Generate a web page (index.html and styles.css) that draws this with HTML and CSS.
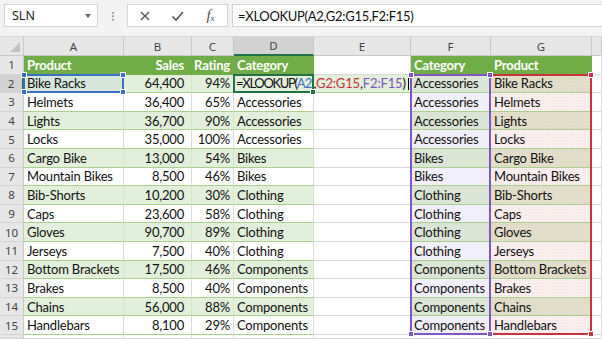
FILE: index.html
```html
<!DOCTYPE html>
<html>
<head>
<meta charset="utf-8">
<link rel="stylesheet" href="styles.css">
</head>
<body>
<div class="app">
  <div class="toolbar">
    <div class="namebox"><span>SLN</span><span class="caret"></span></div>
    <div class="grip"></div>
    <div class="fnbox">
      <svg class="ico" width="12" height="12" viewBox="0 0 12 12"><path d="M2 2 L10 10 M10 2 L2 10" stroke="#555" stroke-width="1.4" fill="none"/></svg>
      <svg class="ico" width="13" height="12" viewBox="0 0 13 12"><path d="M1.5 6.5 L5 10 L12 2" stroke="#555" stroke-width="1.6" fill="none"/></svg>
      <span class="fx">f<sub>x</sub></span>
    </div>
    <div class="formula">=XLOOKUP(A2,G2:G15,F2:F15)</div>
  </div>

  <div class="sheetwrap">
    <div class="sheet">
      <div class="r colhdr">
        <div class="corner"><span class="tri"></span></div>
        <div class="ch">A</div><div class="ch">B</div><div class="ch">C</div><div class="ch on">D</div><div class="ch">E</div><div class="ch">F</div><div class="ch">G</div><div class="ch"></div>
      </div>
      <div class="r hdr">
        <div class="rh">1</div>
        <div class="c t">Product</div><div class="c t n nb">Sales</div><div class="c t n">Rating</div><div class="c t">Category</div><div class="c"></div><div class="c t">Category</div><div class="c t">Product</div><div class="c"></div>
      </div>
      <div class="r g">
        <div class="rh on">2</div>
        <div class="c t a2">Bike Racks</div><div class="c t n nb">64,400</div><div class="c t n">94%</div>
        <div class="c t edit"><span class="etext"><span class="fn">=XLOOKUP(</span><span class="kb">A2</span>,<span class="kr">G2:G15</span>,<span class="kp">F2:F15</span>)</span><span class="cursor"></span></div>
        <div class="c t f">Accessories</div><div class="c t gc">Bike Racks</div><div class="c"></div>
      </div>
      <div class="r">
        <div class="rh">3</div>
        <div class="c t">Helmets</div><div class="c t n nb">36,400</div><div class="c t n">65%</div><div class="c t">Accessories</div><div class="c"></div><div class="c t f">Accessories</div><div class="c t gc">Helmets</div><div class="c"></div>
      </div>
      <div class="r g">
        <div class="rh">4</div>
        <div class="c t">Lights</div><div class="c t n nb">36,700</div><div class="c t n">90%</div><div class="c t">Accessories</div><div class="c"></div><div class="c t f">Accessories</div><div class="c t gc">Lights</div><div class="c"></div>
      </div>
      <div class="r">
        <div class="rh">5</div>
        <div class="c t">Locks</div><div class="c t n nb">35,000</div><div class="c t n">100%</div><div class="c t">Accessories</div><div class="c"></div><div class="c t f">Accessories</div><div class="c t gc">Locks</div><div class="c"></div>
      </div>
      <div class="r g">
        <div class="rh">6</div>
        <div class="c t">Cargo Bike</div><div class="c t n nb">13,000</div><div class="c t n">54%</div><div class="c t">Bikes</div><div class="c"></div><div class="c t f">Bikes</div><div class="c t gc">Cargo Bike</div><div class="c"></div>
      </div>
      <div class="r">
        <div class="rh">7</div>
        <div class="c t">Mountain Bikes</div><div class="c t n nb">8,500</div><div class="c t n">46%</div><div class="c t">Bikes</div><div class="c"></div><div class="c t f">Bikes</div><div class="c t gc">Mountain Bikes</div><div class="c"></div>
      </div>
      <div class="r g">
        <div class="rh">8</div>
        <div class="c t">Bib-Shorts</div><div class="c t n nb">10,200</div><div class="c t n">30%</div><div class="c t">Clothing</div><div class="c"></div><div class="c t f">Clothing</div><div class="c t gc">Bib-Shorts</div><div class="c"></div>
      </div>
      <div class="r">
        <div class="rh">9</div>
        <div class="c t">Caps</div><div class="c t n nb">23,600</div><div class="c t n">58%</div><div class="c t">Clothing</div><div class="c"></div><div class="c t f">Clothing</div><div class="c t gc">Caps</div><div class="c"></div>
      </div>
      <div class="r g">
        <div class="rh">10</div>
        <div class="c t">Gloves</div><div class="c t n nb">90,700</div><div class="c t n">89%</div><div class="c t">Clothing</div><div class="c"></div><div class="c t f">Clothing</div><div class="c t gc">Gloves</div><div class="c"></div>
      </div>
      <div class="r">
        <div class="rh">11</div>
        <div class="c t">Jerseys</div><div class="c t n nb">7,500</div><div class="c t n">40%</div><div class="c t">Clothing</div><div class="c"></div><div class="c t f">Clothing</div><div class="c t gc">Jerseys</div><div class="c"></div>
      </div>
      <div class="r g">
        <div class="rh">12</div>
        <div class="c t">Bottom Brackets</div><div class="c t n nb">17,500</div><div class="c t n">46%</div><div class="c t">Components</div><div class="c"></div><div class="c t f">Components</div><div class="c t gc">Bottom Brackets</div><div class="c"></div>
      </div>
      <div class="r">
        <div class="rh">13</div>
        <div class="c t">Brakes</div><div class="c t n nb">8,500</div><div class="c t n">40%</div><div class="c t">Components</div><div class="c"></div><div class="c t f">Components</div><div class="c t gc">Brakes</div><div class="c"></div>
      </div>
      <div class="r g">
        <div class="rh">14</div>
        <div class="c t">Chains</div><div class="c t n nb">56,000</div><div class="c t n">88%</div><div class="c t">Components</div><div class="c"></div><div class="c t f">Components</div><div class="c t gc">Chains</div><div class="c"></div>
      </div>
      <div class="r">
        <div class="rh">15</div>
        <div class="c t">Handlebars</div><div class="c t n nb">8,100</div><div class="c t n">29%</div><div class="c t">Components</div><div class="c"></div><div class="c t f">Components</div><div class="c t gc">Handlebars</div><div class="c"></div>
      </div>
      <div class="r">
        <div class="rh"></div>
        <div class="c"></div><div class="c"></div><div class="c"></div><div class="c"></div><div class="c"></div><div class="c"></div><div class="c"></div><div class="c"></div>
      </div>
    </div>

    <div class="overlay">
      <div class="sel selA"><span class="h tl"></span><span class="h tr"></span><span class="h bl"></span><span class="h br"></span></div>
      <div class="sel selD"><span class="h br"></span></div>
      <div class="sel selG"><span class="h tr"></span><span class="h br"></span></div>
      <div class="sel selF"><span class="h tl"></span><span class="h tr"></span><span class="h bl"></span><span class="h br"></span></div>
    </div>
  </div>
</div>
</body>
</html>
```

FILE: styles.css
```css
* { box-sizing: border-box; margin: 0; padding: 0; }
html, body { width: 602px; height: 339px; overflow: hidden; background: #fff; }
body { font-family: Lato, "Liberation Sans", sans-serif; color: #111; }

.toolbar {
  height: 36px;
  background: #f3f3f3;
  display: flex;
  align-items: flex-start;
  padding: 4px 0 0 4px;
}
.namebox {
  width: 94px; height: 23px;
  background: #fff;
  border: 1px solid #d4d4d4;
  display: flex; align-items: center; justify-content: space-between;
  padding: 0 6px 0 7px;
  font-family: "Noto Sans", sans-serif; font-size: 12.5px; color: #222;
}
.caret {
  width: 0; height: 0;
  border-left: 3.5px solid transparent;
  border-right: 3.5px solid transparent;
  border-top: 4px solid #666;
}
.grip {
  width: 2px; height: 10px;
  margin: 7px 0 0 14px;
  background-image: radial-gradient(circle, #999 0.9px, transparent 1.1px);
  background-size: 2px 3.5px;
}
.fnbox {
  width: 101px; height: 23px;
  margin-left: 13px;
  background: #fff;
  border: 1px solid #d4d4d4;
  display: grid;
  grid-template-columns: repeat(3, 1fr);
  align-items: center; justify-items: center;
}
.ico { display: block; }
.fx {
  font-family: "Liberation Serif", serif;
  font-style: italic;
  font-size: 15px;
  color: #555;
  line-height: 1;
}
.fx sub { font-size: 9px; vertical-align: -1px; }
.formula {
  flex: 1;
  height: 23px;
  margin: 0 -2px 0 4px;
  background: #fff;
  border: 1px solid #d4d4d4;
  display: flex; align-items: center;
  padding-left: 5px;
  font-size: 13px; letter-spacing: -0.3px; color: #111;
}

.sheetwrap { position: relative; }
.sheet, .overlay {
  display: grid;
  grid-template-columns: 24px 100px 68px 42px 80px 97px 80px 101px 10px;
  grid-template-rows: 20px repeat(15, 18.6px) 4px;
}
.overlay { position: absolute; inset: 0; pointer-events: none; }
.r { display: contents; }

.corner {
  background: #e6e6e6;
  border-right: 1px solid #c8c8c8;
  border-bottom: 1px solid #c8c8c8;
  border-top: 1px solid #d6d6d6;
  display: flex; align-items: flex-end; justify-content: flex-end;
  padding: 0 3px 3px 0;
}
.tri {
  width: 0; height: 0;
  border-left: 10px solid transparent;
  border-bottom: 10px solid #c2c2c2;
}
.ch {
  background: #e6e6e6;
  border-top: 1px solid #d6d6d6;
  border-right: 1px solid #c8c8c8;
  border-bottom: 1px solid #c8c8c8;
  display: flex; align-items: center; justify-content: center;
  font-family: "Noto Sans", sans-serif; font-size: 11.5px; color: #444;
}
.ch.on { background: #d2d2d2; border-bottom: 2px solid #217346; }
.rh {
  background: #e6e6e6;
  border-right: 1px solid #c8c8c8;
  border-bottom: 1px solid #d4d4d4;
  display: flex; align-items: center; justify-content: center;
  font-family: "Noto Sans", sans-serif; font-size: 11.5px; color: #444;
}
.rh.on { background: #d2d2d2; border-right: 2px solid #217346; }

.c {
  border-right: 1px solid #dadada;
  border-bottom: 1px solid #dadada;
  display: flex; align-items: center;
  padding: 0 3px;
  white-space: nowrap;
  overflow: hidden;
  font-size: 13px;
  letter-spacing: -0.2px;
}
.c.n { justify-content: flex-end; }
.c.nb { padding-right: 7px; }
.c.t { border-bottom-color: #a9d08e; }
.r.g .c.t { background: #e2efda; border-right-color: #d3e6c6; }
.r.hdr .c.t {
  background: #70ad47; color: #fff; font-weight: bold;
  border-right-color: #70ad47; border-bottom-color: #70ad47;
}
.r.g .c.a2 { background: #d6e6da; }

.r .c.f { background: #f1eff9; }
.r.g .c.f { background: #dbe5d6; }
.r .c.gc {
  background-color: #fbeeee;
  background-image: radial-gradient(circle, rgba(200, 120, 120, 0.12) 0.6px, transparent 0.9px);
  background-size: 3px 3px;
}
.r.g .c.gc {
  background-color: #e2dec9;
  background-image: radial-gradient(circle, rgba(150, 130, 90, 0.12) 0.6px, transparent 0.9px);
  background-size: 3px 3px;
}

.r.g .c.edit {
  grid-column: span 2;
  background: #e2efda;
  border-right-color: transparent;
  overflow: visible;
  padding-left: 2px;
}
.etext { letter-spacing: -0.15px; flex: none; }
.fn { letter-spacing: -1.3px; }
.kb { color: #3b6fc4; letter-spacing: -0.8px; margin-right: 2px; }
.kr { color: #c7343f; }
.kp { color: #7e57c2; }
.cursor { display: inline-block; flex: none; width: 1px; height: 14px; background: #000; margin-left: 2px; }

.sel { position: relative; margin: -1px 0 0 -1px; }
.selA { grid-area: 3 / 2 / 4 / 3; border: 2px solid #3b6fc4; }
.selD { grid-area: 3 / 5 / 4 / 6; border: 2px solid #217346; }
.selF { grid-area: 3 / 7 / 17 / 8; border: 2px solid #7e57c2; }
.selG { grid-area: 3 / 8 / 17 / 9; border: 2px solid #c7343f; border-left: 0; margin-left: 0; }

.h {
  position: absolute;
  width: 6px; height: 6px;
  border: 1px solid #fff;
}
.selA .h { background: #3b6fc4; }
.selD .h { background: #217346; }
.selF .h { background: #7e57c2; }
.selG .h { background: #c7343f; }
.h.tl { top: -4px; left: -4px; }
.h.tr { top: -4px; right: -4px; }
.h.bl { bottom: -4px; left: -4px; }
.h.br { bottom: -4px; right: -4px; }
```
